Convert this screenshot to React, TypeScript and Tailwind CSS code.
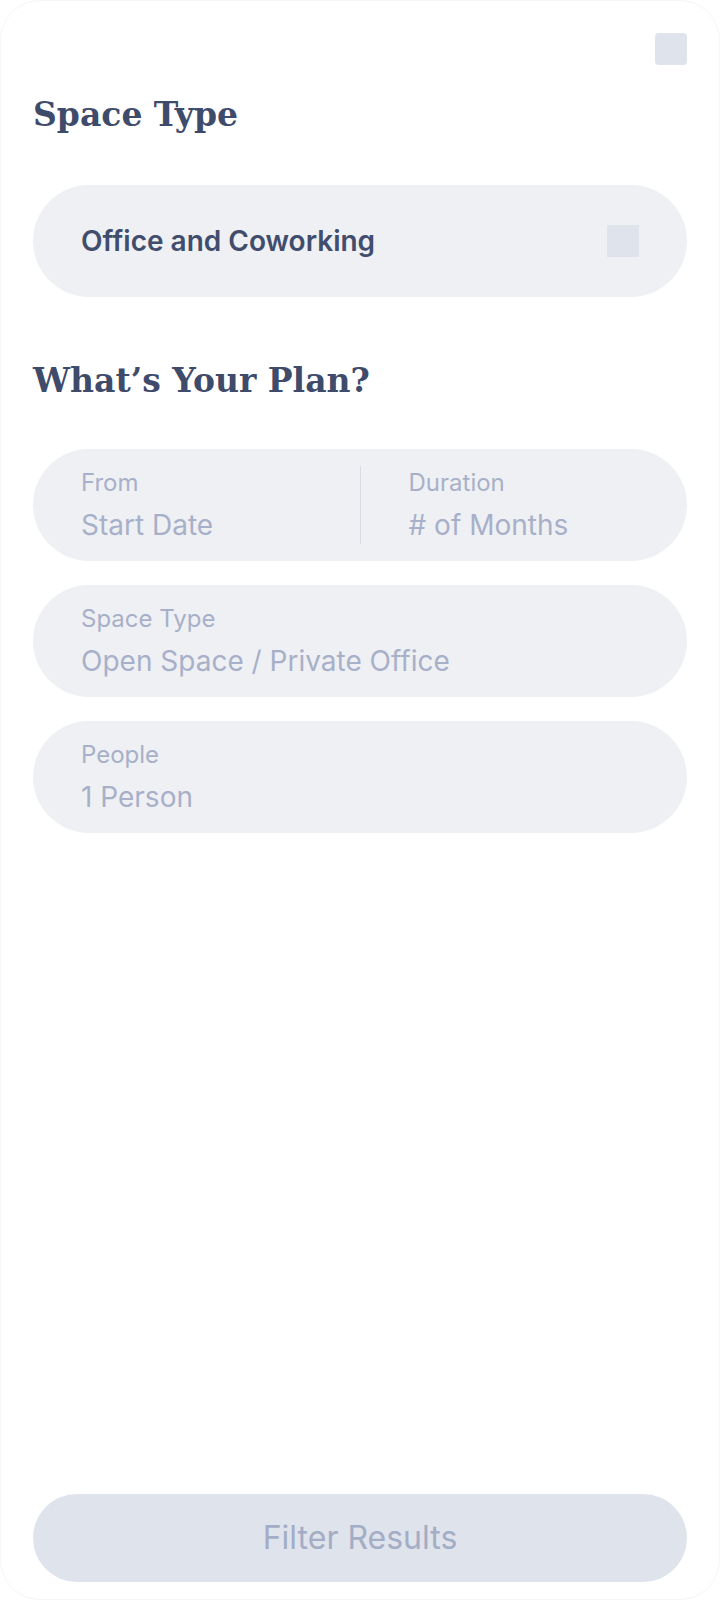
const sans = { fontFamily: 'Inter, "Noto Sans", sans-serif' };
const serif = { fontFamily: '"DejaVu Serif", "Liberation Serif", serif' };

const Field = ({ label, value }: { label: string; value: string }) => (
  <div className="flex flex-col pl-12 pt-5 pb-5">
    <span className="text-[24px] leading-[28px] text-[#a7b0c8]">{label}</span>
    <span className="mt-3 text-[28px] leading-[32px] text-[#a7b0c8]">{value}</span>
  </div>
);

export default function App() {
  return (
    <div
      style={sans}
      className="flex h-[1600px] w-[720px] flex-col overflow-hidden rounded-[40px] border border-[#f5f5f5] bg-white px-8 pt-8 pb-[17px]"
    >
      <div className="flex justify-end">
        <div className="h-8 w-8 rounded-[4px] bg-[#dfe3eb]" />
      </div>

      <h2 style={serif} className="mt-[30px] h-10 text-[33px] font-bold leading-[40px] text-[#3f4b6b]">
        Space Type
      </h2>

      <button className="mt-[50px] flex h-28 w-full items-center justify-between rounded-full bg-[#eff0f4] px-12">
        <span className="text-[28px] font-semibold text-[#414d6c]">Office and Coworking</span>
        <span className="h-8 w-8 bg-[#dfe3eb]" />
      </button>

      <h2 style={serif} className="mt-16 h-10 text-[33px] font-bold leading-[40px] text-[#3f4b6b]">
        What’s Your Plan?
      </h2>

      <div className="mt-12 flex flex-col gap-6">
        <div className="flex rounded-full bg-[#eff0f4]">
          <div className="flex-1">
            <Field label="From" value="Start Date" />
          </div>
          <div className="my-[17px] w-px bg-[#d8dce5]" />
          <div className="flex-1">
            <Field label="Duration" value="# of Months" />
          </div>
        </div>
        <div className="rounded-full bg-[#eff0f4]">
          <Field label="Space Type" value="Open Space / Private Office" />
        </div>
        <div className="rounded-full bg-[#eff0f4]">
          <Field label="People" value="1 Person" />
        </div>
      </div>

      <div className="flex-1" />

      <button className="flex h-[88px] w-full items-center justify-center rounded-full bg-[#dfe3eb] text-[32px] text-[#a3adc5]">
        Filter Results
      </button>
    </div>
  );
}
